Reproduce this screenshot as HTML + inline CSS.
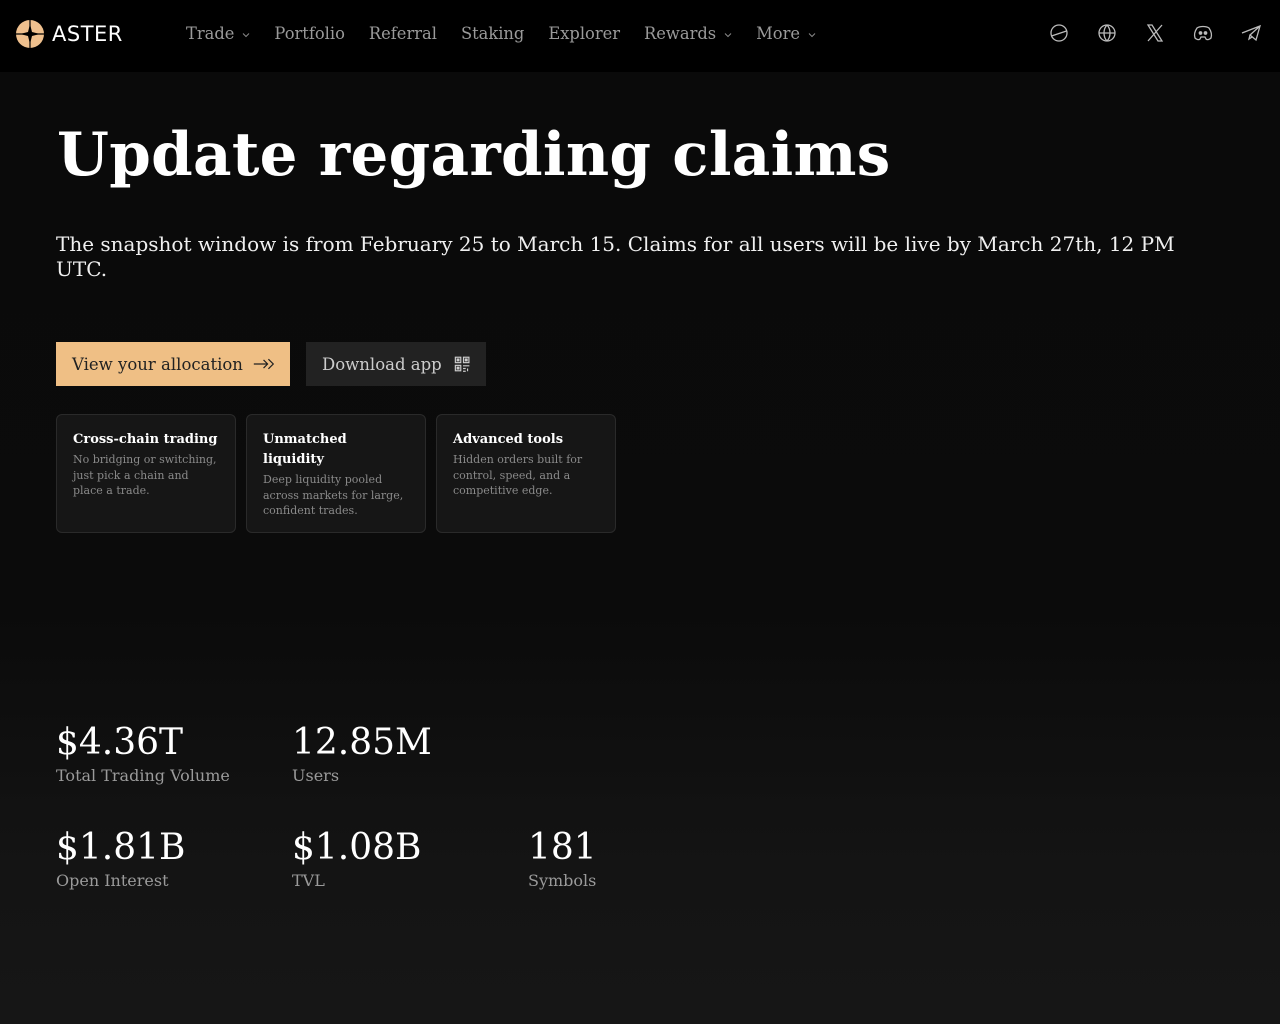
<!DOCTYPE html>
<html><head><meta charset="utf-8"><style>
*{margin:0;padding:0;box-sizing:border-box}
body{width:1280px;height:1024px;overflow:hidden;font-family:"DejaVu Serif","Liberation Serif",serif;color:#fff;background:linear-gradient(180deg,#0a0a0a 0%,#0b0b0b 60%,#141414 85%,#161616 100%)}
.hdr{height:72px;background:#000;position:relative}
.logo{position:absolute;left:16px;top:20px;display:flex;align-items:center;gap:8px;font-family:"DejaVu Sans","Liberation Sans",sans-serif;font-size:21px;letter-spacing:.5px}
.nav{position:absolute;left:186px;top:24px;display:flex;gap:24px;font-size:16.3px;color:#9a9a9a;white-space:nowrap}
.nav svg{width:8px;height:6px;margin-left:8px;vertical-align:middle}
.icons{position:absolute;right:18px;top:22px;display:flex;gap:26px}
.icons svg{width:22px;height:22px;stroke:#bbb;fill:none;stroke-width:1.3}
h1{position:absolute;left:57px;top:120px;font-size:59.5px;font-weight:bold;letter-spacing:.3px;white-space:nowrap}
.p{position:absolute;left:56px;top:232px;width:1160px;font-size:20px;line-height:25px;color:#f0f0f0}
.btn{position:absolute;top:342px;height:44px;font-size:16.5px;padding:0 16px;display:flex;align-items:center;white-space:nowrap}
.b1{left:56px;width:234px;background:#efbf85;color:#222}
.b2{left:306px;width:180px;background:#222;color:#ccc}
.card{position:absolute;top:414px;width:180px;height:119px;background:#161616;border:1px solid #2a2a2a;border-radius:6px;padding:15px 16px}
.card b{display:block;font-size:13px;line-height:20px;color:#fff;white-space:nowrap}
.card b.w{white-space:normal}
.card p{font-size:11px;line-height:15.5px;color:#8a8a8a;margin-top:2px}
.st{position:absolute}
.st .v{font-size:36px;line-height:40px}
.st .l{font-size:16px;color:#9a9a9a;margin-top:3px}
</style></head><body>
<div class="hdr">
<div class="logo"><svg width="28" height="28" viewBox="0 0 28 28"><circle cx="14" cy="14" r="14" fill="#efc08e"/><path d="M14 4 L16 12 L24 14 L16 16 L14 24 L12 16 L4 14 L12 12Z" fill="#000"/><path d="M0 14H28M14 0V28" stroke="#000" stroke-width="1.2"/></svg>ASTER</div>
<div class="nav"><span>Trade<svg viewBox="0 0 8 6"><path d="M1 1.5L4 4.5L7 1.5" stroke="#888" fill="none"/></svg></span><span>Portfolio</span><span>Referral</span><span>Staking</span><span>Explorer</span><span>Rewards<svg viewBox="0 0 8 6"><path d="M1 1.5L4 4.5L7 1.5" stroke="#888" fill="none"/></svg></span><span>More<svg viewBox="0 0 8 6"><path d="M1 1.5L4 4.5L7 1.5" stroke="#888" fill="none"/></svg></span></div>
<div class="icons">
<svg viewBox="0 0 22 22"><circle cx="11" cy="11" r="8"/><path d="M3.5 14L18.5 9"/></svg>
<svg viewBox="0 0 22 22"><circle cx="11" cy="11" r="8"/><path d="M3 11H19M11 3C7 7 7 15 11 19M11 3C15 7 15 15 11 19"/></svg>
<svg viewBox="0 0 22 22"><path d="M4 3H8L18 19H14Z M18 3L4 19"/></svg>
<svg viewBox="0 0 22 22"><path d="M5 6C8 4 14 4 17 6C19 9 20 13 19 16C17 18 15 18 14 17L13 15H9L8 17C7 18 5 18 3 16C2 13 3 9 5 6Z"/><circle cx="8.5" cy="11" r="1.2" fill="#bbb"/><circle cx="13.5" cy="11" r="1.2" fill="#bbb"/></svg>
<svg viewBox="0 0 22 22"><path d="M2 11L20 4L16 18L10 13L20 4M10 13L9 17L12 15"/></svg>
</div></div>
<h1>Update regarding claims</h1>
<div class="p">The snapshot window is from February 25 to March 15. Claims for all users will be live by March 27th, 12 PM UTC.</div>
<div class="btn b1">View your allocation<svg width="26" height="18" viewBox="0 0 26 18" style="margin-left:10px"><path d="M1 9H18M13 4L18 9L13 14M19 3L25 9L19 15" stroke="#222" stroke-width="1.5" fill="none"/></svg></div>
<div class="btn b2">Download app<svg width="18" height="18" viewBox="0 0 18 18" style="margin-left:12px" fill="none" stroke="#ccc" stroke-width="1.3"><rect x="1.5" y="1.5" width="6" height="6"/><rect x="10.5" y="1.5" width="6" height="6"/><rect x="1.5" y="10.5" width="6" height="6"/><rect x="3.5" y="3.5" width="2" height="2" fill="#ccc"/><rect x="12.5" y="3.5" width="2" height="2" fill="#ccc"/><rect x="3.5" y="12.5" width="2" height="2" fill="#ccc"/><path d="M10 11H17M10 14H13M15 14V17M10 17H13"/></svg></div>
<div class="card" style="left:56px"><b>Cross-chain trading</b><p>No bridging or switching, just pick a chain and place a trade.</p></div>
<div class="card" style="left:246px"><b class="w">Unmatched liquidity</b><p>Deep liquidity pooled across markets for large, confident trades.</p></div>
<div class="card" style="left:436px"><b>Advanced tools</b><p>Hidden orders built for control, speed, and a competitive edge.</p></div>
<div class="st" style="left:56px;top:723px"><div class="v">$4.36T</div><div class="l">Total Trading Volume</div></div>
<div class="st" style="left:292px;top:723px"><div class="v">12.85M</div><div class="l">Users</div></div>
<div class="st" style="left:56px;top:828px"><div class="v">$1.81B</div><div class="l">Open Interest</div></div>
<div class="st" style="left:292px;top:828px"><div class="v">$1.08B</div><div class="l">TVL</div></div>
<div class="st" style="left:528px;top:828px"><div class="v">181</div><div class="l">Symbols</div></div>
</body></html>
